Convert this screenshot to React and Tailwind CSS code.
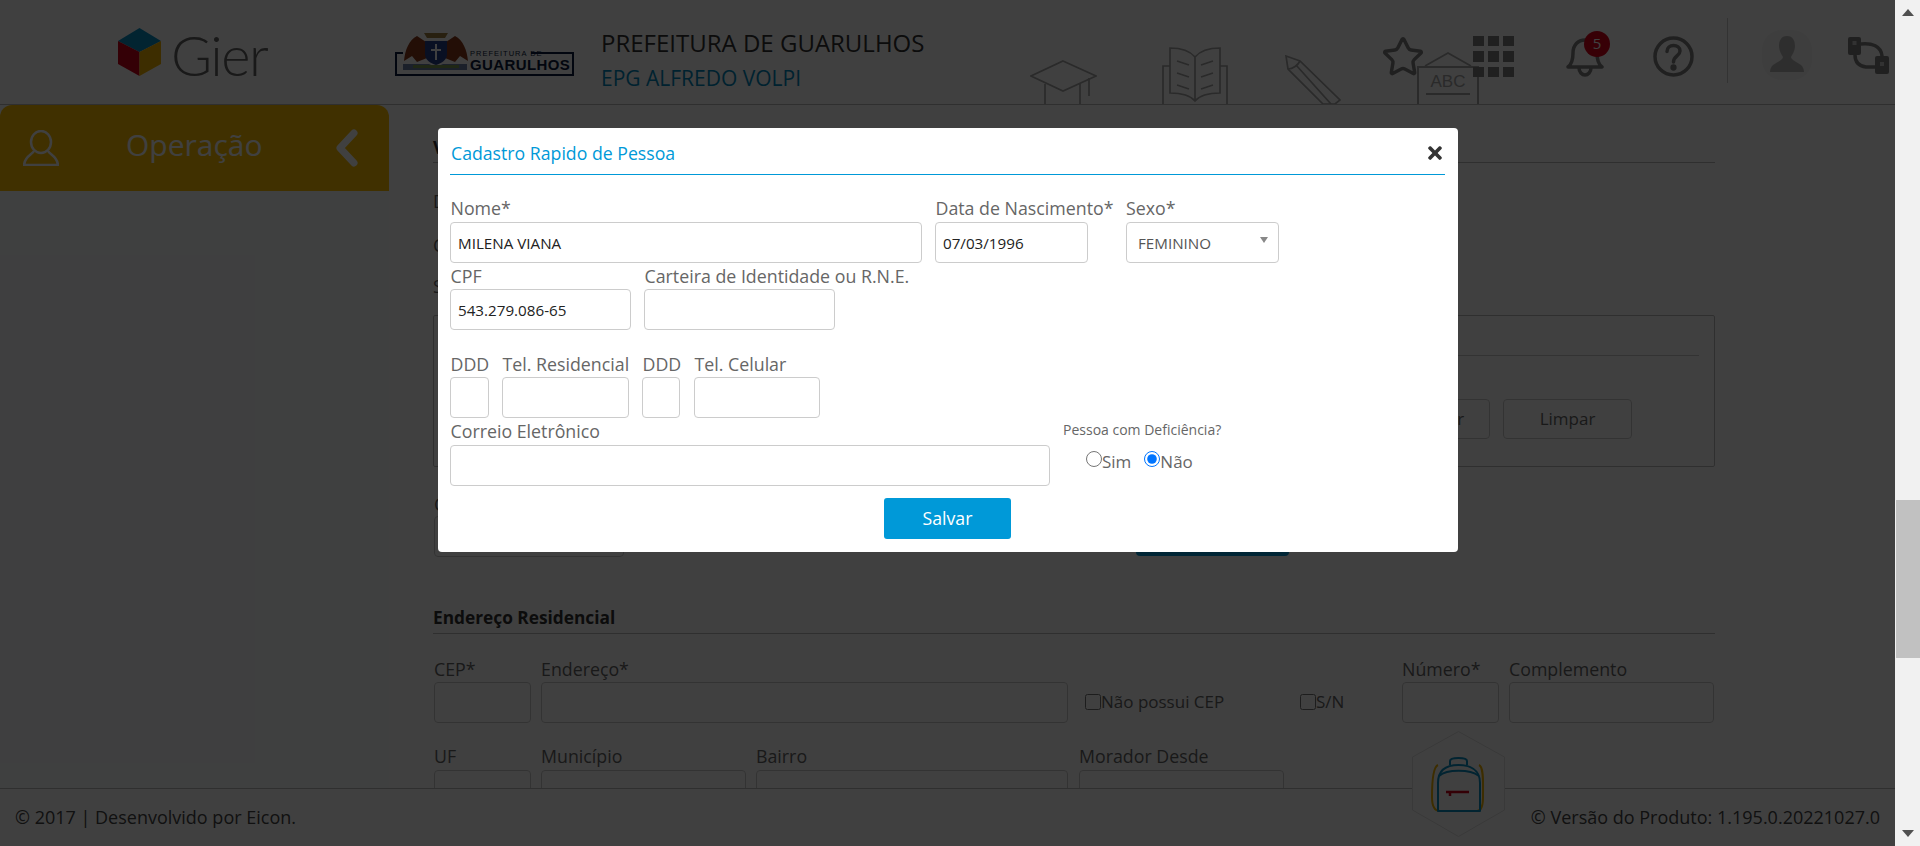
import { Star } from "lucide-react";
import { FaTimes } from "react-icons/fa";

// caixa de texto padrao do sistema
function Field({ label, value, className = "", gap = "", labelClass = "" }) {
  return (
    <div className={className}>
      <label className={`block h-[24px] pl-[0.5px] whitespace-nowrap text-[17.8px] leading-[24px] text-[#666] ${gap} ${labelClass}`}>{label}</label>
      <input
        readOnly
        value={value || ""}
        className="block h-[41px] w-full rounded-[4px] border border-[#ccc] bg-white px-[7px] text-[15.2px] text-[#222] outline-none"
      />
    </div>
  );
}

function GierCube() {
  return (
    <svg width="43" height="48" viewBox="0 0 43 48">
      <path d="M21.5 0L43 13L21.5 24L0 13Z" fill="#0a8fc4" />
      <path d="M0 13L21.5 24V48L0 36Z" fill="#d0021b" />
      <path d="M43 13L21.5 24V48L43 36Z" fill="#f4b400" />
    </svg>
  );
}

function GuarulhosLogo() {
  return (
    <svg width="179" height="44" viewBox="0 0 179 44">
      <path d="M8 21H1V43H178V21H136" fill="none" stroke="#0b1a3c" strokeWidth="2" />
      <path d="M22 4C14 8 10 18 9 29L17 24L22 30L32 26L34 12Z" fill="#8a3a1a" />
      <path d="M60 4C68 8 72 18 73 29L65 24L60 30L50 26L48 12Z" fill="#8a3a1a" />
      <path d="M30 9H52V22C52 28 47 31 41 33C35 31 30 28 30 22Z" fill="#27408b" />
      <path d="M40 12H42V17H46V19H42V28H40V19H36V17H40Z" fill="#fff" />
      <path d="M29 1H53L50 6H32Z" fill="#a08040" />
      <path d="M8 32H34L41 35L48 32H72V38H8Z" fill="#6b7fa8" />
      <path d="M18 33H64V36H18Z" fill="#7d9a55" />
      <text x="75" y="24" fontFamily="'Liberation Sans', sans-serif" fontSize="7.5" letterSpacing="1" fill="#0b1a3c">PREFEITURA DE</text>
      <text x="75" y="38" fontFamily="'Liberation Sans', sans-serif" fontWeight="700" fontSize="15" letterSpacing="0.4" fill="#0b1a3c">GUARULHOS</text>
    </svg>
  );
}

// desenhos claros no fundo do cabecalho
function HeaderArt() {
  const stroke = "#a6a6a6";
  return (
    <div className="absolute bottom-0 left-[1030px] flex items-end">
      <svg width="67" height="44" viewBox="0 0 67 44" fill="none" stroke={stroke} strokeWidth="1.7">
        <path d="M33 1L66 16L33 31L1 16Z" />
        <path d="M15 24V44M50 24V44" />
        <path d="M59 18V36" />
      </svg>
      <svg className="ml-[65px]" width="66" height="57" viewBox="0 0 66 57" fill="none" stroke={stroke} strokeWidth="1.7">
        <path d="M1 57V19H8M65 57V19H58" />
        <path d="M8 1C18 1 28 4 33 10C38 4 48 1 58 1V46C48 46 38 48 33 54C28 48 18 46 8 46ZM33 10V54" />
        <path d="M15 14L27 18M15 26L27 30M15 38L27 42M51 14L39 18M51 26L39 30M51 38L39 42" />
      </svg>
      <svg className="ml-[57px]" width="56" height="49" viewBox="0 0 56 49" fill="none" stroke={stroke} strokeWidth="1.7">
        <path d="M1 1L15 6L55 45L50 49H38L3 14Z" />
        <path d="M3 14C8 14 13 10 15 6M11 10L46 49" />
      </svg>
      <div className="ml-[76px] w-[62px]">
        <svg className="block" width="62" height="14" viewBox="0 0 62 14" fill="none" stroke={stroke} strokeWidth="1.7">
          <path d="M8 14L31 1L54 14" />
        </svg>
        <div className="h-[38px] border-x-2 border-t-2 border-[#a6a6a6] pt-[4px] text-center font-['Liberation_Sans',sans-serif] text-[17px] leading-[20px] text-[#a6a6a6]">
          ABC
          <div className="mx-[7px] mt-[1px] h-[2px] bg-[#a6a6a6]" />
        </div>
      </div>
    </div>
  );
}

function GridIcon() {
  return (
    <div className="grid h-[41px] w-[41px] grid-cols-3 grid-rows-3 gap-x-[4px] gap-y-[5px]">
      {[...Array(9)].map((_, i) => (
        <div key={i} className="bg-[#808080]" />
      ))}
    </div>
  );
}

function BellIcon() {
  return (
    <div className="relative h-[40px] w-[38px]">
      <svg width="38" height="40" viewBox="0 0 38 40" fill="none" stroke="#808080" strokeWidth="3.5" strokeLinecap="round" strokeLinejoin="round">
        <path d="M2 30C6 27 7 22 7 16C7 8 12 3 19 3C26 3 31 8 31 16C31 22 32 27 36 30Z" />
        <path d="M13 31C13 35 16 38 19 38C22 38 25 35 25 31" />
      </svg>
      <div className="absolute left-[18px] top-[-6px] flex h-[26px] w-[26px] items-center justify-center rounded-full bg-[#d9001b] text-[15px] text-white">5</div>
    </div>
  );
}

function HelpIcon() {
  return (
    <svg width="41" height="41" viewBox="0 0 41 41" fill="none" stroke="#808080" strokeWidth="3.5" strokeLinecap="round">
      <circle cx="20.5" cy="20.5" r="18.5" />
      <path d="M14 15.5C14 11.5 17 9.5 20.5 9.5C24 9.5 27 11.5 27 15C27 20 20.5 20 20.5 26" />
      <circle cx="20.5" cy="31.5" r="1.4" fill="#808080" />
    </svg>
  );
}

function SwapIcon() {
  return (
    <svg width="41" height="37" viewBox="0 0 41 37" fill="none">
      <rect x="0" y="0" width="13" height="18" rx="2" fill="#808080" />
      <rect x="4.5" y="4" width="4" height="4" fill="#c8c8c8" />
      <rect x="27" y="19" width="14" height="18" rx="2" fill="#808080" />
      <rect x="32" y="25" width="4" height="4" fill="#c8c8c8" />
      <path d="M7 18C7 25 11 29 18 30H27M13 7C24 6 33 9 34 19" stroke="#808080" strokeWidth="3.5" strokeLinecap="round" />
    </svg>
  );
}

function AvatarIcon() {
  return (
    <div className="flex h-[50px] w-[50px] items-end justify-center rounded-[20px] bg-[#f6f6f6] pb-[8px]">
      <svg width="34" height="36" viewBox="0 0 34 36" fill="#b8b8b8">
        <path d="M17 0C23 0 25 5 25 10C25 15 22 19 21 21C21 24 27 26 31 29C33 31 34 33 34 36H0C0 33 1 31 3 29C7 26 13 24 13 21C12 19 9 15 9 10C9 5 11 0 17 0Z" />
      </svg>
    </div>
  );
}

function Backpack() {
  return (
    <svg width="93" height="106" viewBox="0 0 93 106" fill="none">
      <path d="M46.5 0.5L92.5 26V79L46.5 105.5L0.5 79V26Z" fill="#fff" stroke="#e2e2e2" strokeWidth="1" />
      <path d="M26 34C21 36 20 52 20 66C20 74 22 80 28 80" stroke="#f4b400" strokeWidth="2" />
      <path d="M67 34C72 36 71 52 71 66C71 74 69 80 65 80" stroke="#f4b400" strokeWidth="2" />
      <path d="M26 80V52C26 38 36 34 46.5 34C57 34 68 38 68 52V80H26Z" stroke="#0a8fc4" strokeWidth="2" strokeLinejoin="round" />
      <path d="M38 34V30C38 28 41 27 46.5 27C52 27 55 28 55 30V34" stroke="#0a8fc4" strokeWidth="2" />
      <path d="M27 45C35 38 58 38 67 45" stroke="#0a8fc4" strokeWidth="2" />
      <path d="M34 61H57" stroke="#d0021b" strokeWidth="2.5" />
      <path d="M38 61V65" stroke="#d0021b" strokeWidth="2.5" />
    </svg>
  );
}

function BackgroundForm() {
  return (
    <main className="ml-[44px] w-[1282px] text-[17.8px] text-[#666]">
      <div className="mt-[28px] h-[30px] border-b border-[#bbb] font-bold leading-[28px] text-[#333]">V</div>
      <div className="mt-[26px] h-[24px] leading-[24px]">D</div>
      <div className="mt-[20px] h-[24px] leading-[24px]">C</div>
      <div className="mt-[17px] h-[24px] leading-[24px]">S</div>

      {/* quadro de busca */}
      <div className="mt-[17px] h-[152px] rounded-[2px] border border-[#bbb] px-[15px]">
        <div className="h-[40px] border-b border-[#ccc]" />
        <div className="mt-[43px] flex justify-end gap-[13px] pr-[67px]">
          <div className="flex h-[40px] w-[129px] items-center justify-center rounded-[4px] border border-[#ccc] text-[17px]">Pesquisar</div>
          <div className="flex h-[40px] w-[129px] items-center justify-center rounded-[4px] border border-[#ccc] text-[17px]">Limpar</div>
        </div>
      </div>

      <div className="ml-px mt-[25px] flex items-end">
        <Field label="C" className="w-[190px]" labelClass="!pl-0" />
        <div className="ml-[512px] mb-[1px] flex h-[40px] w-[153px] items-center justify-center rounded-[4px] bg-[#0099d8] text-white" />
      </div>

      <div className="mt-[49px] h-[28px] border-b border-[#bbb] text-[17.3px] font-bold leading-[24px] text-[#333]">Endereço Residencial</div>

      <div className="ml-px mt-[23px] flex">
        <Field label="CEP*" className="w-[97px]" gap="mb-[1px]" labelClass="!pl-0" />
        <Field label="Endereço*" className="ml-[10px] w-[527px]" gap="mb-[1px]" labelClass="!pl-0" />
        <label className="ml-[17px] mt-[33px] flex h-[24px] w-[215px] items-center text-[17px]">
          <input type="checkbox" readOnly className="h-[16px] w-[16px]" />
          Não possui CEP
        </label>
        <label className="mt-[33px] flex h-[24px] w-[102px] items-center text-[17px]">
          <input type="checkbox" readOnly className="h-[16px] w-[16px]" />
          S/N
        </label>
        <Field label="Número*" className="w-[97px]" gap="mb-[1px]" labelClass="!pl-0" />
        <Field label="Complemento" className="ml-[10px] w-[205px]" gap="mb-[1px]" labelClass="!pl-0" />
      </div>
      <div className="ml-px mt-[21px] flex">
        <Field label="UF" className="w-[97px]" gap="mb-[2px]" labelClass="!pl-0" />
        <Field label="Município" className="ml-[10px] w-[205px]" gap="mb-[2px]" labelClass="!pl-0" />
        <Field label="Bairro" className="ml-[10px] w-[312px]" gap="mb-[2px]" labelClass="!pl-0" />
        <Field label="Morador Desde" className="ml-[11px] w-[205px]" gap="mb-[2px]" labelClass="!pl-0" />
      </div>
    </main>
  );
}

function PersonModal() {
  return (
    <div className="absolute left-[438px] top-[128px] h-[424px] w-[1020px] rounded-[4px] bg-white pl-[12px] pr-[13px]">
      <div className="flex h-[47px] items-center justify-between border-b border-[#0099d8] pl-[1px] pt-[4px]">
        <h2 className="text-[17.7px] text-[#0099d8]">Cadastro Rapido de Pessoa</h2>
        <FaTimes className="text-[20px] text-[#333]" />
      </div>

      <div className="mt-[21px] flex">
        <Field label="Nome*" value="MILENA VIANA" className="w-[472px]" gap="mb-[2px]" />
        <Field label="Data de Nascimento*" value="07/03/1996" className="ml-[13px] w-[153px]" gap="mb-[2px]" />
        <div className="ml-[38px] w-[153px]">
          <label className="mb-[2px] block h-[24px] text-[17.8px] leading-[24px] text-[#666]">Sexo*</label>
          <div className="relative">
            <select className="block h-[41px] w-full appearance-none rounded-[4px] border border-[#ccc] bg-white pl-[11px] pt-[2px] text-[15.2px] text-[#555] outline-none">
              <option>FEMININO</option>
            </select>
            <div className="absolute right-[11px] top-[15px] h-0 w-0 border-x-[4.5px] border-t-[6px] border-x-transparent border-t-[#888]" />
          </div>
        </div>
      </div>

      <div className="mt-[1px] flex">
        <Field label="CPF" value="543.279.086-65" className="w-[181px]" gap="mb-[1px]" />
        <Field label="Carteira de Identidade ou R.N.E." className="ml-[13px] w-[191px]" gap="mb-[1px]" />
      </div>

      <div className="mt-[22px] flex">
        <Field label="DDD" className="w-[39px]" gap="mb-[1px]" />
        <Field label="Tel. Residencial" className="ml-[13px] w-[127px]" gap="mb-[1px]" />
        <Field label="DDD" className="ml-[13px] w-[38px]" gap="mb-[1px]" />
        <Field label="Tel. Celular" className="ml-[14px] w-[126px]" gap="mb-[1px]" />
      </div>

      <div className="mt-[1px] flex">
        <Field label="Correio Eletrônico" className="w-[600px]" gap="mb-[2px]" />
        <div className="ml-[13px] mt-[1px]">
          <div className="h-[20px] text-[14px] leading-[20px] text-[#666]">Pessoa com Deficiência?</div>
          <div className="ml-[23px] mt-[9px] flex items-center text-[17px] text-[#666]">
            <label className="flex items-center">
              <input type="radio" name="pcd" readOnly className="mb-[5px] h-[16px] w-[16px]" />
              Sim
            </label>
            <label className="ml-[13px] flex items-center">
              <input type="radio" name="pcd" defaultChecked className="mb-[5px] h-[16px] w-[16px]" />
              Não
            </label>
          </div>
        </div>
      </div>

      <div className="mt-[12px] flex justify-center">
        <button className="h-[41px] w-[127px] rounded-[3px] bg-[#0099d8] text-[17.7px] text-white">Salvar</button>
      </div>
    </div>
  );
}

export default function App() {
  return (
    <div className="flex h-[846px] w-[1920px] overflow-hidden font-['Open_Sans',sans-serif]">
      <div className="relative flex w-[1895px] flex-col bg-white">
        <header className="relative flex h-[105px] shrink-0 items-center border-b border-[#bbb] pl-[118px]">
          <HeaderArt />
          <GierCube />
          <span className="ml-[10px] mt-[5px] w-[95px] font-['Lato',sans-serif] text-[56px] font-light leading-none tracking-[-1.5px] text-[#666]">Gier</span>
          <div className="ml-[129px] mt-[4px]">
            <GuarulhosLogo />
          </div>
          <div className="ml-[27px] mt-[15px]">
            <div className="text-[24px] leading-[27px] text-[#333]">PREFEITURA DE GUARULHOS</div>
            <div className="mt-[10px] text-[21px] leading-[25px] text-[#0087bd]">EPG ALFREDO VOLPI</div>
          </div>
          <div className="relative ml-auto flex h-[65px] items-center pr-[6px]">
            <Star size={44} strokeWidth={1.9} className="mt-[9px] text-[#808080]" />
            <div className="ml-[48px] mt-[9px]"><GridIcon /></div>
            <div className="ml-[52px] mt-[9px]"><BellIcon /></div>
            <div className="ml-[49px] mt-[9px]"><HelpIcon /></div>
            <div className="ml-[33px] -mt-[3px] h-[65px] w-px bg-[#ccc]" />
            <div className="ml-[34px] mt-[6px]"><AvatarIcon /></div>
            <div className="ml-[36px] mt-[6px]"><SwapIcon /></div>
          </div>
        </header>

        <div className="flex min-h-0 flex-1 overflow-hidden">
          <aside className="w-[389px] shrink-0 bg-[#fbfdff]">
            <div className="flex h-[86px] items-center rounded-t-[12px] bg-[#ffc000] pl-[23px] pr-[30px] text-white">
              <svg width="36" height="36" viewBox="0 0 36 36" fill="none" stroke="currentColor" strokeWidth="2.5">
                <ellipse cx="18" cy="12" rx="10" ry="11" />
                <path d="M11 21C9 25 2 26 1 35H35C34 26 27 25 25 21" />
              </svg>
              <span className="ml-[67px] -mt-[7px] text-[30px] leading-none">Operação</span>
              <svg className="ml-auto" width="24" height="38" viewBox="0 0 24 38" fill="none" stroke="currentColor" strokeWidth="7" strokeLinecap="round" strokeLinejoin="round">
                <path d="M19 4L5 19L19 34" />
              </svg>
            </div>
          </aside>
          <BackgroundForm />
        </div>

        <footer className="flex h-[58px] shrink-0 items-center justify-between border-t border-[#bbb] px-[15px] text-[18px] text-[#444]">
          <span>© 2017 | Desenvolvido por Eicon.</span>
          <span>© Versão do Produto: 1.195.0.20221027.0</span>
        </footer>

        <div className="absolute left-[1412px] top-[731px]">
          <Backpack />
        </div>

        <div className="absolute inset-0 bg-black/75" />
        <PersonModal />
      </div>

      {/* barra de rolagem */}
      <div className="flex w-[25px] shrink-0 flex-col items-center justify-between bg-[#f1f1f1] py-[9px]">
        <div className="h-0 w-0 border-x-[6px] border-b-[7px] border-x-transparent border-b-[#505050]" />
        <div className="h-0 w-0 border-x-[6px] border-t-[7px] border-x-transparent border-t-[#505050]" />
      </div>
      <div className="absolute left-[1896px] top-[500px] h-[158px] w-[24px] bg-[#c1c1c1]" />
    </div>
  );
}
